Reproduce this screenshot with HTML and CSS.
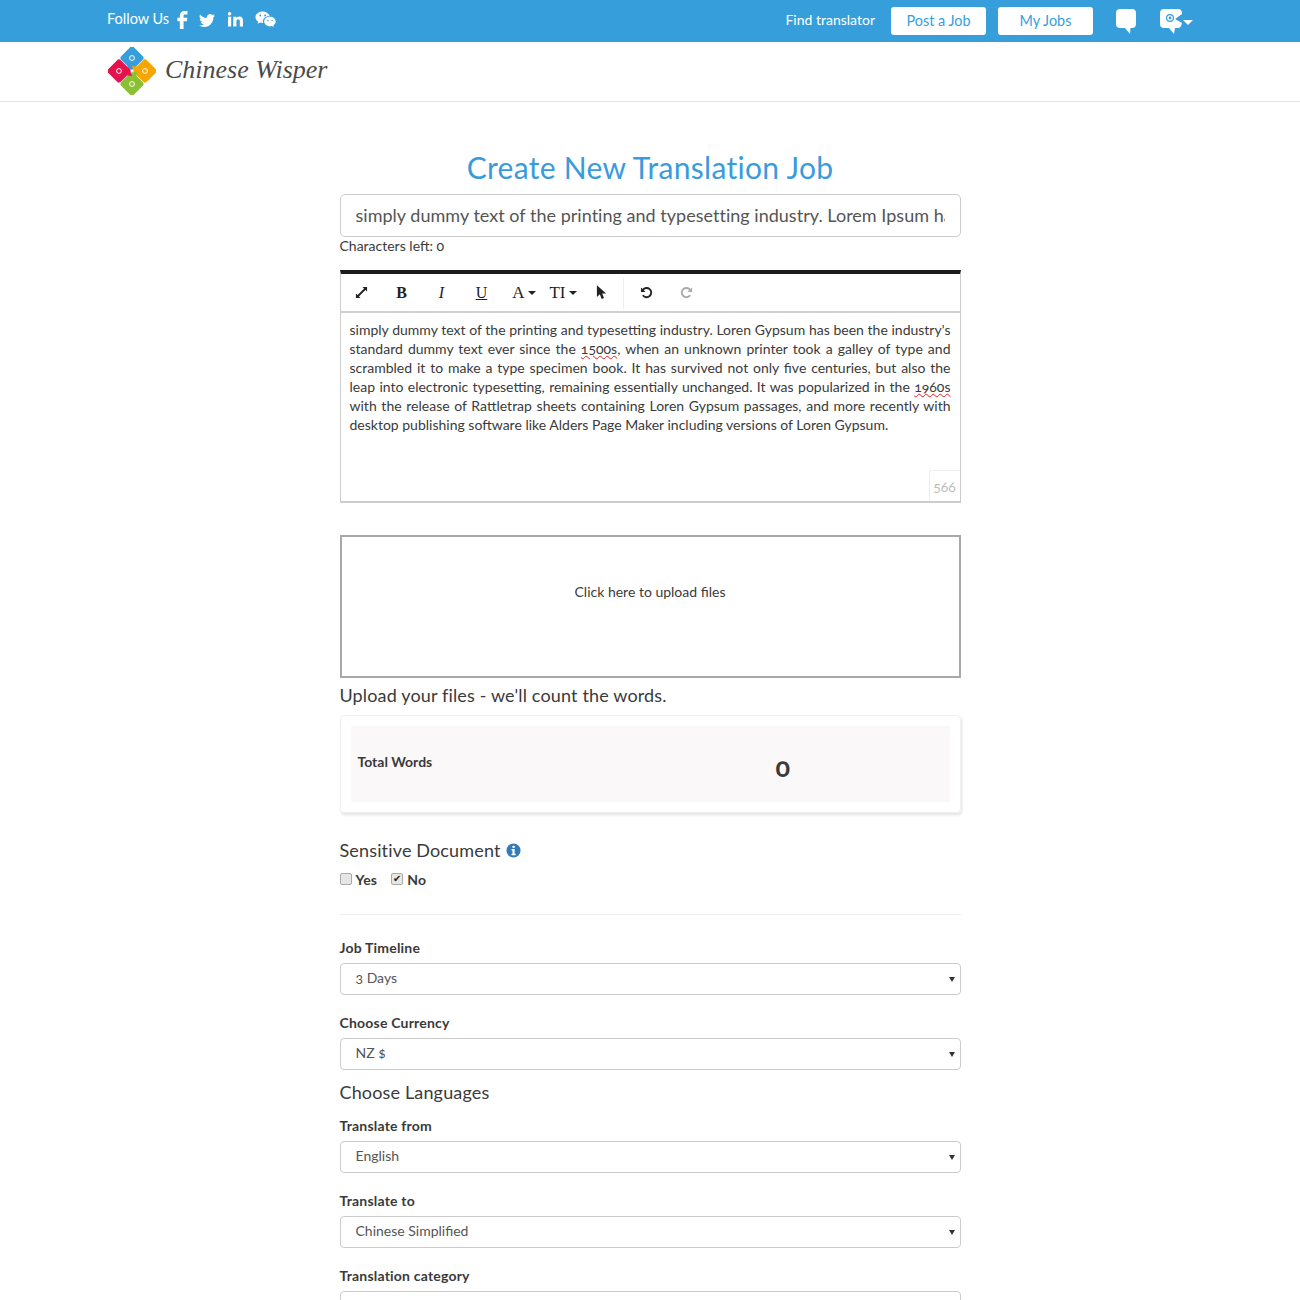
FILE: index.html
```html
<!DOCTYPE html>
<html lang="en">
<head>
    <meta charset="UTF-8">
    <meta name="viewport" content="width=device-width, initial-scale=1.0">
    <title>Chinese Wisper - Create New Translation Job</title>
    <link rel="stylesheet" href="styles.css">
</head>
<body>

    <!-- Top Bar -->
    <div class="top-bar">
        <div class="follow">
            <span class="follow-text">Follow Us</span>
            <svg class="social social-fb" viewBox="0 0 16 16"><path d="M9.6 3.2H12V0H9.4C6.8 0 5.2 1.7 5.2 4.2V6H3v3h2.2v7h3.3V9h2.9l.5-3H8.5V4.3c0-.7.4-1.1 1.1-1.1z"/></svg>
            <svg class="social social-tw" viewBox="0 0 16 16"><path d="M5.026 15c6.038 0 9.341-5.003 9.341-9.334 0-.14 0-.282-.006-.422A6.685 6.685 0 0 0 16 3.542a6.658 6.658 0 0 1-1.889.518 3.301 3.301 0 0 0 1.447-1.817 6.533 6.533 0 0 1-2.087.793A3.286 3.286 0 0 0 7.875 6.03a9.325 9.325 0 0 1-6.767-3.429 3.289 3.289 0 0 0 1.018 4.382A3.323 3.323 0 0 1 .64 6.575v.045a3.288 3.288 0 0 0 2.632 3.218 3.203 3.203 0 0 1-.865.115 3.23 3.23 0 0 1-.614-.057 3.283 3.283 0 0 0 3.067 2.277A6.588 6.588 0 0 1 .78 13.58a6.32 6.32 0 0 1-.78-.045A9.344 9.344 0 0 0 5.026 15z"/></svg>
            <svg class="social social-in" viewBox="0 0 16 16"><rect x="0" y="5" width="3.4" height="10.5"/><circle cx="1.7" cy="1.9" r="1.9"/><path d="M5.6 5h3.2v1.500C9.4 5.500 10.600 4.700 12.200 4.700c2.800 0 3.800 1.800 3.800 4.600v6.200h-3.400V10c0-1.400-.4-2.400-1.700-2.400-1.300 0-1.900 1-1.900 2.400v5.500H5.600z"/></svg>
            <svg class="social social-wc" viewBox="0 0 22 18">
                <path d="M8 0.500C3.800 0.500.4 3.200.4 6.600c0 2 1.200 3.700 3 4.800l-.7 2.200 2.600-1.300c.9.300 1.800.4 2.700.4h.6c-.2-.6-.3-1.100-.3-1.700 0-3.300 3.100-5.800 6.900-5.800h.4C14.100 2.400 11.300.5 8 .5z"/>
                <path d="M21.800 11.100c0-2.800-2.800-5-6.100-5s-6.100 2.200-6.100 5 2.800 5 6.100 5c.7 0 1.400-.1 2.100-.3l2 1.100-.5-1.800c1.500-1 2.500-2.400 2.500-4z"/>
                <circle class="wc-eye" cx="5.500" cy="4.800" r="1"/><circle class="wc-eye" cx="10.500" cy="4.800" r="1"/>
                <circle class="wc-eye" cx="13.500" cy="10" r=".8"/><circle class="wc-eye" cx="18" cy="10" r=".8"/>
            </svg>
        </div>
        <div class="top-nav">
            <a class="top-link" href="#">Find translator</a>
            <a class="top-btn" href="#">Post a Job</a>
            <a class="top-btn" href="#">My Jobs</a>
            <svg class="bubble" viewBox="0 0 20 25"><path d="M4 0h12c2.500 0 4 1.500 4 4v11c0 2.500-1.500 4-4 4h-1.500l-.5 6-5-6H4c-2.500 0-4-1.500-4-4V4c0-2.500 1.500-4 4-4z"/></svg>
            <div class="user-menu">
                <svg class="bubble-user" viewBox="0 0 24 25">
                    <path d="M4 0h14c2.500 0 4 1.500 4 4v1l-7 5 7 4c-.5 3-2 5-4 5h-3l-1 6-5-6H4c-2.500 0-4-1.500-4-4V4c0-2.500 1.500-4 4-4z"/>
                    <circle class="user-eye" cx="10" cy="9" r="3.400"/><circle cx="10" cy="9" r="1.400"/>
                </svg>
                <span class="caret-white"></span>
            </div>
        </div>
    </div>

    <!-- Logo Header -->
    <div class="logo-bar">
        <svg class="logo-mark" viewBox="0 0 48 48">
            <g fill="#369fdb">
                <rect x="15" y="2" width="18" height="18" rx="3" transform="rotate(45 24 11)"/>
                <path d="M20 15l7 6-8 3z"/>
                <circle class="logo-eye" cx="24" cy="11" r="2.400"/>
            </g>
            <g fill="#f7a600" transform="rotate(90 24 24)">
                <rect x="15" y="2" width="18" height="18" rx="3" transform="rotate(45 24 11)"/>
                <path d="M20 15l7 6-8 3z"/>
                <circle class="logo-eye" cx="24" cy="11" r="2.400"/>
            </g>
            <g fill="#8cc034" transform="rotate(180 24 24)">
                <rect x="15" y="2" width="18" height="18" rx="3" transform="rotate(45 24 11)"/>
                <path d="M20 15l7 6-8 3z"/>
                <circle class="logo-eye" cx="24" cy="11" r="2.400"/>
            </g>
            <g fill="#e5124d" transform="rotate(270 24 24)">
                <rect x="15" y="2" width="18" height="18" rx="3" transform="rotate(45 24 11)"/>
                <path d="M20 15l7 6-8 3z"/>
                <circle class="logo-eye" cx="24" cy="11" r="2.400"/>
            </g>
        </svg>
        <span class="logo-text">Chinese Wisper</span>
    </div>

    <!-- Job Form -->
    <div class="job-form">
        <h1 class="page-title">Create New Translation Job</h1>

        <input class="title-input" type="text" value="simply dummy text of the printing and typesetting industry. Lorem Ipsum has been">
        <div class="chars-left">Characters left: 0</div>

        <!-- Editor -->
        <div class="editor">
            <div class="toolbar">
                <span class="tool tool-expand">
                    <svg viewBox="0 0 14 14" width="13" height="13"><path d="M8 1h5v5l-1.800-1.800L4.200 11.200 6 13H1V8l1.800 1.800 7-7z"/></svg>
                </span>
                <span class="tool tool-serif tool-bold">B</span>
                <span class="tool tool-serif tool-italic">I</span>
                <span class="tool tool-serif tool-under">U</span>
                <span class="tool tool-serif tool-drop tool-color">A<i class="caret"></i></span>
                <span class="tool tool-serif tool-drop tool-size">TI<i class="caret"></i></span>
                <span class="tool tool-pointer">
                    <svg viewBox="0 0 12 16" width="11" height="15"><path d="M1 0v13l3.200-3 2 5 2.500-1-2-4.800H11z"/></svg>
                </span>
                <span class="tool-sep"></span>
                <span class="tool tool-undo">
                    <svg viewBox="0 0 14 14" width="13" height="13"><path d="M3 4.200A5 5 0 1 1 3 10" fill="none" stroke="#222" stroke-width="2"/><path d="M1 1.500v5h5z"/></svg>
                </span>
                <span class="tool tool-redo">
                    <svg viewBox="0 0 14 14" width="13" height="13"><path d="M11 4.200A5 5 0 1 0 11 10" fill="none" stroke="#aaa" stroke-width="2"/><path d="M13 1.500v5H8z" fill="#aaa"/></svg>
                </span>
            </div>
            <div class="editor-body">
                <p class="editor-text">simply dummy text of the printing and typesetting industry. Loren Gypsum has been the industry's standard dummy text ever since the <span class="typo">1500s</span>, when an unknown printer took a galley of type and scrambled it to make a type specimen book. It has survived not only five centuries, but also the leap into electronic typesetting, remaining essentially unchanged. It was popularized in the <span class="typo">1960s</span> with the release of Rattletrap sheets containing Loren Gypsum passages, and more recently with desktop publishing software like Alders Page Maker including versions of Loren Gypsum.</p>
                <span class="word-count">566</span>
            </div>
        </div>

        <!-- Upload -->
        <div class="upload-box">Click here to upload files</div>
        <h3 class="section-title upload-title">Upload your files - we'll count the words.</h3>

        <div class="words-card">
            <div class="words-inner">
                <span class="words-label">Total Words</span>
                <span class="words-value">0</span>
            </div>
        </div>

        <!-- Sensitive -->
        <h3 class="section-title sensitive-title">Sensitive Document
            <svg class="info-icon" viewBox="0 0 16 16"><circle cx="8" cy="8" r="7.500" fill="#337ab7"/><rect x="6.900" y="2.800" width="2.400" height="2.400" rx=".6" fill="#fff"/><path d="M5.900 6.500h3.300v5h1.100v1.500H5.900v-1.500h1v-3.500h-1z" fill="#fff"/></svg>
        </h3>
        <div class="check-row">
            <label class="check"><input type="checkbox"> Yes</label>
            <label class="check"><input type="checkbox" checked> No</label>
        </div>
        <hr class="divider">

        <!-- Selects -->
        <label class="field-label first-label">Job Timeline</label>
        <div class="select-wrap"><select><option>3 Days</option></select></div>

        <label class="field-label">Choose Currency</label>
        <div class="select-wrap"><select><option>NZ $</option></select></div>

        <h3 class="section-title languages-title">Choose Languages</h3>

        <label class="field-label lang-label">Translate from</label>
        <div class="select-wrap"><select><option>English</option></select></div>

        <label class="field-label">Translate to</label>
        <div class="select-wrap"><select><option>Chinese Simplified</option></select></div>

        <label class="field-label">Translation category</label>
        <div class="select-wrap"><select><option>General</option></select></div>
    </div>

</body>
</html>
```

FILE: styles.css
```css
/* Global Reset */
* {
    margin: 0;
    padding: 0;
    box-sizing: border-box;
}

html, body {
    height: 1300px;
    overflow: hidden;
}

body {
    background: #fff;
    color: #3a3a3a;
    font-family: "Lato", "Open Sans", sans-serif;
    font-feature-settings: "onum";
    font-size: 14px;
}

/* Top Bar */
.top-bar {
    height: 42px;
    background: #369fdb;
    padding: 0 107px;
    display: flex;
    align-items: center;
    justify-content: space-between;
    color: #fff;
}

.follow {
    display: flex;
    align-items: center;
    margin-top: -3px;
}

.follow-text {
    font-size: 14.5px;
    margin-top: -3px;
    margin-right: 5px;
}

.social {
    fill: #fff;
    display: block;
}

.social-fb { width: 18px; height: 18px; margin-right: 7px; }
.social-tw { width: 16px; height: 16px; margin-right: 13px; }
.social-in { width: 15px; height: 15px; margin-right: 12px; }
.social-wc { width: 21px; height: 17px; }
.wc-eye { fill: #369fdb; }

.top-nav {
    display: flex;
    align-items: center;
}

.top-link {
    color: #fff;
    text-decoration: none;
    font-size: 14px;
    margin-right: 16px;
    padding-bottom: 3px;
}

.top-btn {
    width: 95px;
    height: 28px;
    margin-right: 12px;
    padding-bottom: 2px;
    background: #fff;
    color: #369fdb;
    text-decoration: none;
    border-radius: 3px;
    font-size: 14.4px;
    display: flex;
    align-items: center;
    justify-content: center;
}

.bubble {
    width: 20px;
    height: 25px;
    fill: #fff;
    margin: 0 24px 0 11px;
}

.user-menu {
    display: flex;
    align-items: center;
}

.bubble-user {
    width: 24px;
    height: 25px;
    fill: #fff;
}

.bubble-user circle { fill: #369fdb; }
.bubble-user .user-eye { fill: none; stroke: #369fdb; stroke-width: 1.2; }

.caret-white {
    width: 0;
    height: 0;
    border-left: 5px solid transparent;
    border-right: 5px solid transparent;
    border-top: 5px solid #fff;
    margin-left: -1px;
    margin-top: 2px;
}

/* Logo Header */
.logo-bar {
    height: 60px;
    border-bottom: 1px solid #e2e2e2;
    padding: 5px 108px 0;
    display: flex;
    align-items: flex-start;
}

.logo-mark {
    width: 48px;
    height: 48px;
}

.logo-eye {
    fill: none;
    stroke: #fff;
    stroke-width: 1;
}

.logo-text {
    font-family: "Liberation Serif", serif;
    font-style: italic;
    font-size: 26px;
    color: #4a4a4a;
    margin: 8px 0 0 9px;
}

/* Job Form */
.job-form {
    width: 621px;
    margin: 0 auto;
    padding-top: 47px;
}

.page-title {
    font-size: 30px;
    font-weight: 400;
    line-height: 36px;
    letter-spacing: 0.3px;
    color: #3a9bdc;
    text-align: center;
}

.title-input {
    display: block;
    width: 100%;
    height: 43px;
    margin-top: 9px;
    padding: 0 15px 2px;
    border: 1px solid #ccc;
    border-radius: 5px;
    font: inherit;
    font-size: 18px;
    letter-spacing: 0.02px;
    color: #555;
}

.chars-left {
    font-size: 14px;
    line-height: 18px;
}

/* Editor */
.editor {
    margin-top: 15px;
    border: 1px solid #ccc;
    border-top: 4px solid #1b1b1b;
    border-bottom: 2px solid #ccc;
    height: 233px;
    display: flex;
    flex-direction: column;
}

.toolbar {
    height: 39px;
    flex-shrink: 0;
    border-bottom: 2px solid #d0d0d0;
    padding-left: 1px;
    display: flex;
    align-items: center;
    color: #222;
}

.tool {
    width: 40px;
    display: flex;
    align-items: center;
    justify-content: center;
}

.tool svg { fill: #222; }

.tool-serif {
    font-family: "Liberation Serif", serif;
    font-size: 16px;
}

.tool-bold { font-weight: bold; }
.tool-italic { font-style: italic; }
.tool-under { text-decoration: underline; }
.tool-drop { width: 41px; font-size: 17px; }
.tool-color { margin-left: 2px; }
.tool-size { margin-left: -2px; }
.tool-pointer { width: 35px; }

.caret {
    width: 0;
    height: 0;
    margin-left: 3px;
    border-left: 4px solid transparent;
    border-right: 4px solid transparent;
    border-top: 4px solid #222;
}

.tool-sep {
    width: 1px;
    height: 32px;
    background: #eee;
    margin: 0 3px 0 4px;
}

.editor-body {
    flex: 1;
    position: relative;
    padding: 7px 9px;
}

.editor-text {
    font-size: 14px;
    line-height: 19px;
    text-align: justify;
}

.typo {
    text-decoration: underline wavy #e02020 1px;
    text-underline-offset: 1px;
}

.word-count {
    position: absolute;
    right: 0;
    bottom: 0;
    width: 31px;
    height: 31px;
    border: 1px solid #eee;
    border-right: 0;
    border-bottom: 0;
    color: #bbb;
    display: flex;
    align-items: center;
    justify-content: center;
}

/* Upload */
.upload-box {
    margin-top: 32px;
    height: 143px;
    border: 2px solid #a8a8a8;
    padding-top: 46px;
    text-align: center;
    line-height: 18px;
}

.section-title {
    font-size: 18px;
    font-weight: 400;
    line-height: 22px;
    letter-spacing: 0.15px;
}

.upload-title { margin-top: 6px; }

.words-card {
    margin-top: 9px;
    height: 98px;
    padding: 10px;
    border: 1px solid #f0f0f0;
    border-radius: 4px;
    box-shadow: 1px 2px 3px rgba(0, 0, 0, 0.12);
}

.words-inner {
    height: 76px;
    background: #faf8f9;
    position: relative;
    padding: 27px 7px 0;
}

.words-label {
    font-weight: 700;
    line-height: 18px;
    display: block;
}

.words-value {
    position: absolute;
    left: 425px;
    top: 25px;
    font-size: 27px;
    font-weight: 700;
    line-height: 32px;
}

/* Sensitive Document */
.sensitive-title {
    margin-top: 26px;
    display: flex;
    align-items: center;
    gap: 5px;
}

.info-icon {
    width: 15px;
    height: 15px;
}

.check-row {
    display: flex;
    gap: 14px;
    margin-top: 10px;
}

.check {
    font-weight: 700;
    line-height: 18px;
    letter-spacing: 0.2px;
    display: flex;
    align-items: center;
    gap: 4px;
}

.check input {
    position: relative;
    width: 12px;
    height: 12px;
    margin-top: -2px;
    appearance: none;
    background: #e6e6e6;
    border: 1px solid #aaa;
    border-radius: 2px;
}

.check input:checked::after {
    content: "\2714";
    position: absolute;
    left: 1px;
    top: -2px;
    font-size: 10px;
    line-height: 14px;
    color: #222;
}

.divider {
    border: 0;
    border-top: 1px solid #eee;
    margin-top: 25px;
}

/* Selects */
.field-label {
    display: block;
    font-weight: 700;
    line-height: 18px;
    letter-spacing: 0.2px;
    margin: 19px 0 6px;
}

.first-label { margin-top: 24px; }
.languages-title { margin-top: 11px; }
.field-label.lang-label { margin-top: 14px; }

.select-wrap {
    position: relative;
}

.select-wrap::after {
    content: "";
    position: absolute;
    right: 6px;
    top: 14px;
    border-left: 3px solid transparent;
    border-right: 3px solid transparent;
    border-top: 5px solid #333;
}

.select-wrap select {
    display: block;
    width: 100%;
    height: 32px;
    padding: 0 15px 3px;
    appearance: none;
    background: #fff;
    border: 1px solid #ccc;
    border-radius: 4px;
    font: inherit;
    color: #555;
}
```
